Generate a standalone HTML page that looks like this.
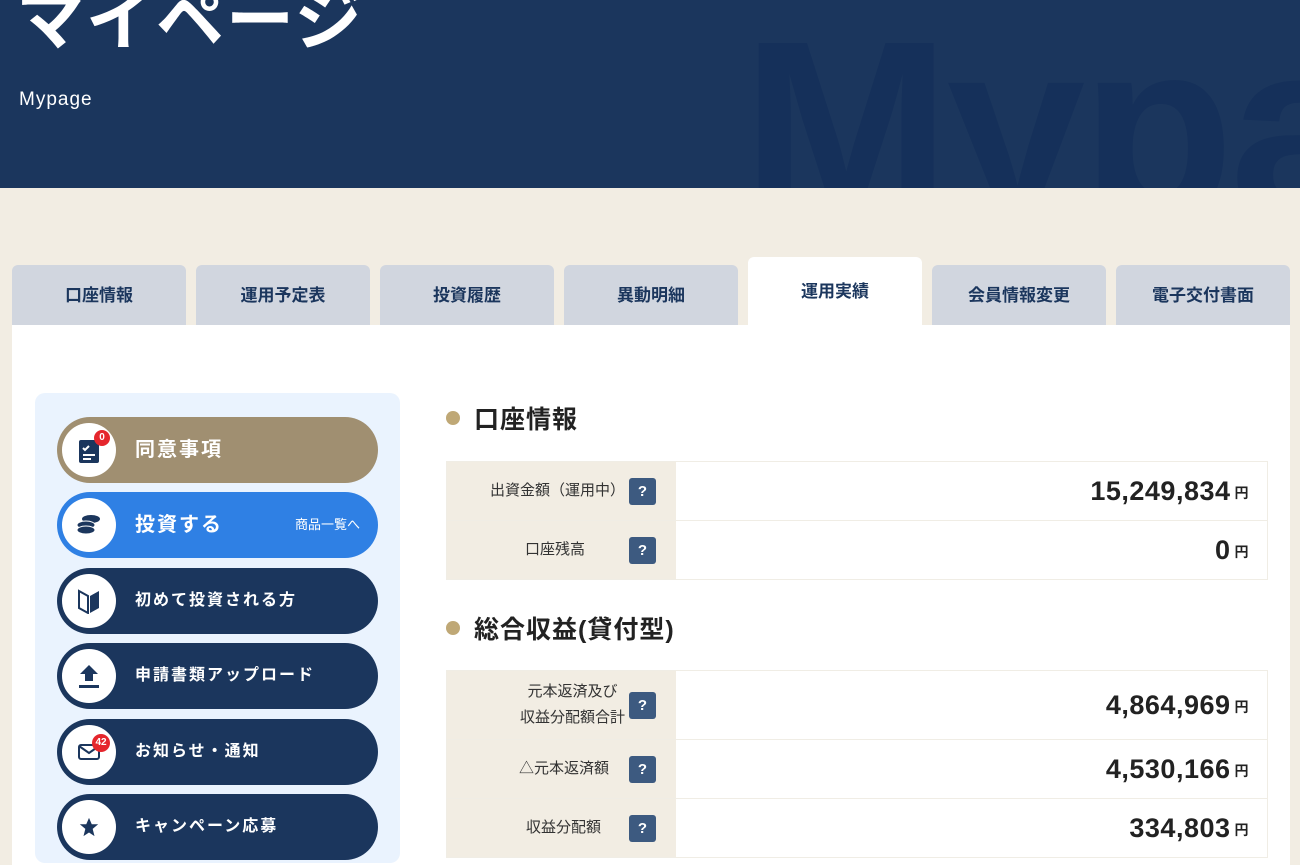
<!DOCTYPE html>
<html><head><meta charset="utf-8"><style>
*{margin:0;padding:0;box-sizing:border-box}
body{width:1300px;height:853px;overflow:hidden;background:#f2ede3;font-family:"Liberation Sans","Noto Sans CJK JP",sans-serif;position:relative}
.hdr{position:absolute;left:0;top:0;width:1300px;height:188px;background:#1b365d;overflow:hidden}
.wm{position:absolute;left:742px;top:4px;font-size:250px;font-weight:bold;color:#15305a;letter-spacing:-4px;line-height:1;font-family:"Liberation Sans",sans-serif}
.t1{position:absolute;left:16px;top:-16px;font-size:68px;font-weight:bold;color:#fff;line-height:1.1;letter-spacing:2px}
.t2{position:absolute;left:19px;top:89px;font-size:19px;color:#fff;letter-spacing:1px}
.tab{position:absolute;top:265px;width:174px;height:60px;background:#d1d6df;border-radius:6px 6px 0 0;text-align:center;line-height:62px;font-size:17px;color:#1b365d;font-weight:bold}
.tab.on{top:257px;height:68px;background:#fff;line-height:70px}
.panel{position:absolute;left:12px;top:325px;width:1278px;height:540px;background:#fff}
.side{position:absolute;left:35px;top:393px;width:365px;height:470px;background:#eaf3fe;border-radius:10px}
.btn{position:absolute;left:57px;width:321px;height:66px;border-radius:33px;background:#1b365d;color:#fff;font-weight:bold;font-size:16px;letter-spacing:2px;line-height:66px;padding-left:78px}
.ic{position:absolute;left:5px;top:6px;width:54px;height:54px;border-radius:50%;background:#fff;display:flex;align-items:center;justify-content:center}
.bd{position:absolute;background:#e5262d;color:#fff;font-size:10px;border-radius:50%;width:16px;height:16px;line-height:16px;text-align:center;letter-spacing:0;font-weight:bold}
h2{position:absolute;left:446px;font-size:25px;color:#222;font-weight:bold;padding-left:28px;letter-spacing:1px}
h2:before{content:"";position:absolute;left:0;top:50%;margin-top:-7px;width:14px;height:14px;border-radius:50%;background:#bfa876}
.row{position:absolute;left:446px;width:822px;border:1px solid #f0ede5;display:flex}
.lb{width:229px;background:#f2ede3;display:flex;align-items:center;justify-content:flex-end;padding-right:20px;font-size:15px;color:#333;text-align:center;line-height:26px}
.lb .q{display:inline-block;width:27px;height:27px;background:#3d5a80;color:#fff;border-radius:3px;font-weight:bold;font-size:15px;line-height:27px;text-align:center;margin-left:4px}
.vl{flex:1;text-align:right;padding-right:18px;font-size:27px;font-weight:bold;color:#222;display:flex;align-items:center;justify-content:flex-end;letter-spacing:0.5px}
.vl small{font-size:14px;margin-left:4px;margin-top:4px}
</style></head><body>
<div class="hdr"><div class="wm">Mypa</div><div class="t1">マイページ</div><div class="t2">Mypage</div></div>
<div class="tab" style="left:12px">口座情報</div>
<div class="tab" style="left:196px">運用予定表</div>
<div class="tab" style="left:380px">投資履歴</div>
<div class="tab" style="left:564px">異動明細</div>
<div class="tab on" style="left:748px">運用実績</div>
<div class="tab" style="left:932px">会員情報変更</div>
<div class="tab" style="left:1116px">電子交付書面</div>
<div class="panel"></div>
<div class="side"></div>
<div class="btn" style="top:417px;background:#a08f71;font-size:20px"><div class="ic"><svg width="24" height="28" viewBox="0 0 24 28"><rect x="2" y="4" width="20" height="23" rx="2" fill="#1b365d"/><path d="M6 12l2 2 4-4M6 19h12M6 23h8" stroke="#fff" stroke-width="2" fill="none"/></svg><div class="bd" style="left:32px;top:7px">0</div></div>同意事項</div>
<div class="btn" style="top:492px;background:#2f80e4;font-size:20px"><div class="ic"><svg width="26" height="22" viewBox="0 0 26 22"><ellipse cx="15" cy="5" rx="9" ry="4" fill="#1b365d"/><ellipse cx="10" cy="11" rx="9" ry="4" fill="#1b365d" stroke="#fff"/><ellipse cx="10" cy="16" rx="9" ry="4" fill="#1b365d" stroke="#fff"/></svg></div>投資する<span style="position:absolute;right:18px;font-size:13px;font-weight:normal;letter-spacing:0">商品一覧へ</span></div>
<div class="btn" style="top:568px"><div class="ic"><svg width="24" height="26" viewBox="0 0 24 26"><path d="M2 3l9 5v17l-9-5z" fill="none" stroke="#1b365d" stroke-width="2"/><path d="M13 8l9-5v17l-9 5z" fill="#1b365d"/></svg></div>初めて投資される方</div>
<div class="btn" style="top:643px"><div class="ic"><svg width="24" height="26" viewBox="0 0 24 26"><path d="M12 2l9 9h-5v7H8v-7H3z" fill="#1b365d"/><rect x="2" y="22" width="20" height="3" fill="#1b365d"/></svg></div>申請書類アップロード</div>
<div class="btn" style="top:719px"><div class="ic"><svg width="22" height="16" viewBox="0 0 22 16"><rect x="1" y="1" width="20" height="14" rx="2" fill="none" stroke="#1b365d" stroke-width="2"/><path d="M1 2l10 7 10-7" fill="none" stroke="#1b365d" stroke-width="2"/></svg><div class="bd" style="left:30px;top:9px;width:18px;height:18px;line-height:18px">42</div></div>お知らせ・通知</div>
<div class="btn" style="top:794px"><div class="ic"><svg width="22" height="22" viewBox="0 0 24 24"><path d="M12 2l3 7h7l-6 5 2 8-6-4-6 4 2-8-6-5h7z" fill="#1b365d"/></svg></div>キャンペーン応募</div>
<h2 style="top:400px">口座情報</h2>
<div class="row" style="top:461px;height:60px"><div class="lb">出資金額（運用中）<span class="q">?</span></div><div class="vl">15,249,834<small>円</small></div></div>
<div class="row" style="top:520px;height:60px"><div class="lb">口座残高<span style="width:40px;display:inline-block"></span><span class="q">?</span></div><div class="vl">0<small>円</small></div></div>
<h2 style="top:610px">総合収益(貸付型)</h2>
<div class="row" style="top:670px;height:70px"><div class="lb">元本返済及び<br>収益分配額合計<span class="q">?</span></div><div class="vl">4,864,969<small>円</small></div></div>
<div class="row" style="top:739px;height:60px"><div class="lb">△元本返済額<span style="width:16px;display:inline-block"></span><span class="q">?</span></div><div class="vl">4,530,166<small>円</small></div></div>
<div class="row" style="top:798px;height:60px"><div class="lb">収益分配額<span style="width:24px;display:inline-block"></span><span class="q">?</span></div><div class="vl">334,803<small>円</small></div></div>
</body></html>
